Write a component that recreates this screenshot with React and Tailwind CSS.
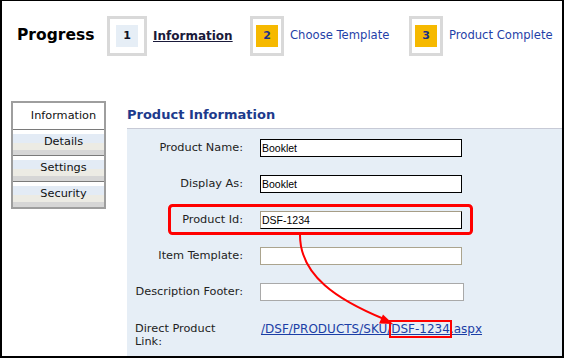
import React from 'react';

/**
 * Product editor: progress steps on top, tab list on the left,
 * product form on the right, with red call-outs drawn over it.
 */

function StepBox({ num, wide, active }) {
  return (
    <div
      className={`flex h-10 shrink-0 items-center justify-center border-[3px] border-[#d9d9d9] ${
        wide ? 'w-10' : 'w-[34px]'
      }`}
    >
      <div
        className={`flex h-[22px] w-[22px] items-center justify-center text-[11px] font-bold ${
          active ? 'bg-[#e6eef6] text-[#111122]' : 'bg-[#f6b900] text-[#1d2f86]'
        }`}
      >
        {num}
      </div>
    </div>
  );
}

function Tab({ label, active }) {
  if (active) {
    return (
      <div className="flex h-[26px] items-center justify-center bg-white pl-[10px] text-[11.3px] text-[#111]">
        {label}
      </div>
    );
  }
  return (
    <div className="flex h-[26px] items-center justify-center border-t border-[#7a7a7a] bg-[linear-gradient(to_bottom,#ffffff_0,#ffffff_4px,#e3ebf5_4px,#e3ebf5_13px,#ecebe4_13px,#ecebe4_20px,#d6d6d6_20px)] pl-[10px] text-[11.3px] text-[#111]">
      {label}
    </div>
  );
}

function Row({ label, children }) {
  return (
    <div className="flex h-9 items-center">
      <div className="w-[108px] shrink-0 text-right text-[11.3px] text-[#222]">{label}</div>
      <div className="ml-[17px]">{children}</div>
    </div>
  );
}

const inputBase =
  "block h-[18px] w-[202px] bg-white pl-px font-['Liberation_Sans',Arial,sans-serif] text-[10.5px] text-black outline-none";

export default function App() {
  return (
    <div className="relative h-[358px] w-[564px] overflow-hidden bg-white font-['DejaVu_Sans',Verdana,sans-serif]">
      <div className="flex h-full flex-col border-x-2 border-b-2 border-t border-black">
        {/* Progress steps */}
        <header className="mt-[15px] flex h-10 items-center pl-[15px]">
          <h1 className="w-[90px] shrink-0 text-[15.5px] font-bold text-black">Progress</h1>
          <StepBox num="1" wide active />
          <span className="ml-[6px] w-[97px] shrink-0 text-[12px] font-bold text-[#1a1a3a] underline">
            Information
          </span>
          <StepBox num="2" />
          <span className="ml-[6px] w-[119px] shrink-0 text-[11.6px] text-[#1f3fa8]">Choose Template</span>
          <StepBox num="3" />
          <span className="ml-[6px] shrink-0 text-[11.6px] text-[#1f3fa8]">Product Complete</span>
        </header>

        <main className="mt-[45px] flex flex-1 pl-[9px]">
          {/* Tabs */}
          <nav className="h-[108px] w-[95px] shrink-0 border-2 border-[#9e9e9e]">
            <Tab label="Information" active />
            <Tab label="Details" />
            <Tab label="Settings" />
            <Tab label="Security" />
          </nav>

          {/* Form */}
          <section className="ml-[21px] flex flex-1 flex-col">
            <h2 className="flex h-[27px] items-center text-[13px] font-bold text-[#1d3a8c]">
              Product Information
            </h2>
            <div className="flex-1 border-t border-[#c7cad6] bg-[#e6eef6] pl-2 pt-px">
              <Row label="Product Name:">
                <input readOnly value="Booklet" className={`${inputBase} border border-black`} />
              </Row>
              <Row label="Display As:">
                <input readOnly value="Booklet" className={`${inputBase} border border-black`} />
              </Row>
              <Row label="Product Id:">
                <input
                  readOnly
                  value="DSF-1234"
                  className={`${inputBase} h-[17px] border border-b-black border-l-[#a69d86] border-r-black border-t-[#a69d86]`}
                />
              </Row>
              <Row label="Item Template:">
                <input readOnly value="" className={`${inputBase} h-5 border border-[#aba48e]`} />
              </Row>
              <Row label="Description Footer:">
                <input readOnly value="" className={`${inputBase} w-[204px] border border-[#a9a9a9]`} />
              </Row>
              <div className="flex items-start pt-3">
                <div className="w-[108px] shrink-0 text-[11.3px] leading-[13px] text-[#222]">
                  Direct Product
                  <br />
                  Link:
                </div>
                <a className="ml-[18px] text-[12px] leading-[14px] text-[#1b3ea6] underline">
                  /DSF/PRODUCTS/SKU/
                  <span className="outline-2 outline-offset-0 outline-[#ff0000]">DSF-1234</span>
                  .aspx
                </a>
              </div>
            </div>
          </section>
        </main>
      </div>

      {/* Call-outs */}
      <svg className="pointer-events-none absolute inset-0" width="564" height="358" viewBox="0 0 564 358">
        <rect x="169.5" y="205.5" width="302" height="28" rx="3" fill="none" stroke="#ff0000" strokeWidth="3" />
        <path d="M300 235 C 300 276, 338 300, 384 319" fill="none" stroke="#ff0000" strokeWidth="2" />
        <polygon points="393,324 379,323.6 383,314.4" fill="#ff0000" />
      </svg>
    </div>
  );
}
